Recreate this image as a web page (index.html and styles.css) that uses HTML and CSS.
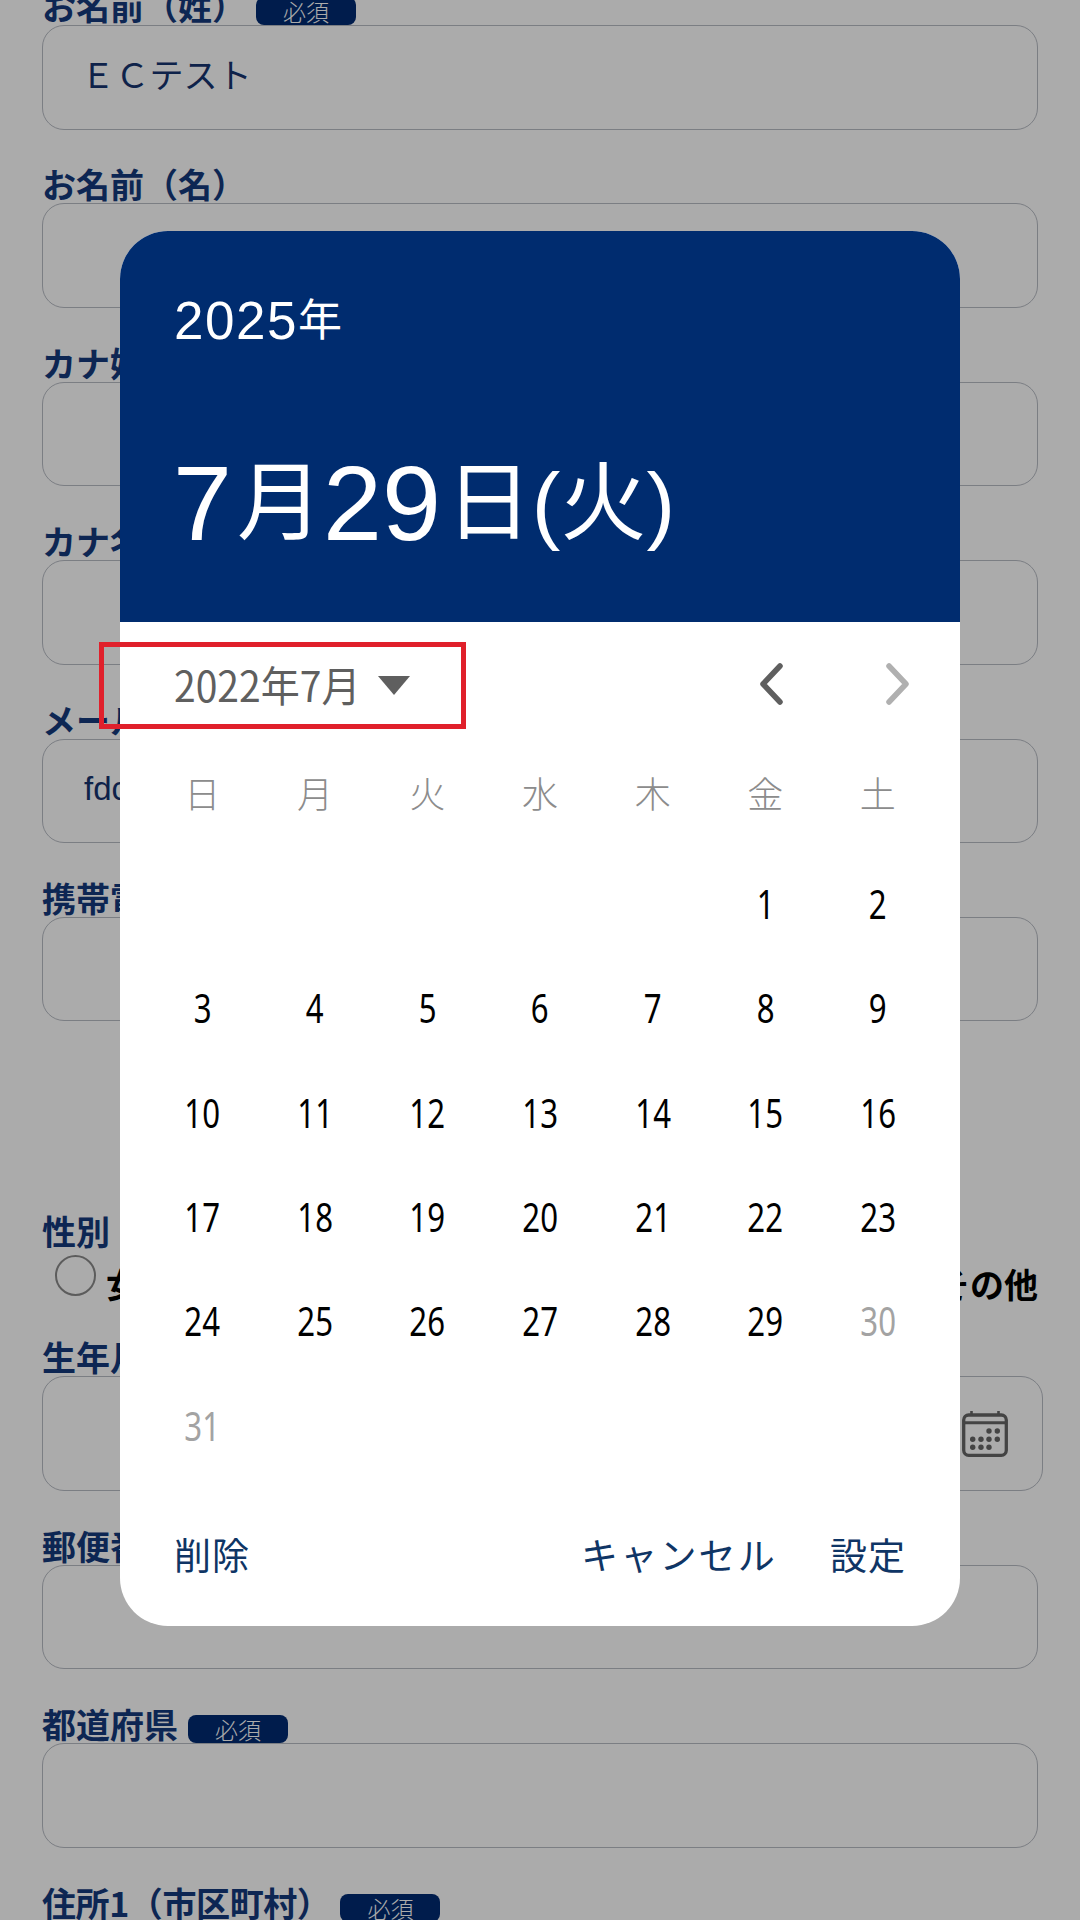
FILE: index.html
```html
<!DOCTYPE html>
<html lang="ja">
<head>
<meta charset="utf-8">
<title>日付選択</title>
<link rel="stylesheet" href="styles.css">
</head>
<body>
<main class="form">
  <section class="field"><div class="label">お名前（姓）<span class="badge">必須</span></div><div class="input"><span class="value">ＥＣテスト</span></div></section>
  <section class="field"><div class="label">お名前（名）</div><div class="input"></div></section>
  <section class="field"><div class="label">カナ姓</div><div class="input"></div></section>
  <section class="field"><div class="label">カナ名</div><div class="input"></div></section>
  <section class="field"><div class="label">メールアドレス</div><div class="input"><span class="value value-mail">fdc</span></div></section>
  <section class="field"><div class="label">携帯電話番号</div><div class="input"></div></section>
  <section class="field field-gender">
    <div class="label label-short">性別</div>
    <div class="radios">
      <label class="radio"><span class="dot"></span><span class="radio-text">女性</span></label>
      <label class="radio"><span class="dot"></span><span class="radio-text">男性</span></label>
      <label class="radio"><span class="radio-text">その他</span></label>
    </div>
  </section>
  <section class="field field-birth"><div class="label">生年月日</div>
    <div class="input input-birth">
      <svg class="cal" viewBox="0 0 46 46" width="46" height="46" aria-hidden="true">
        <rect x="1.7" y="4" width="42.6" height="40.3" rx="5" fill="none" stroke="#666" stroke-width="3.3"/>
        <path d="M1.700 11.700h42.600" stroke="#666" stroke-width="3"/>
        <path d="M9.500 0v5M36.500 0v5" stroke="#666" stroke-width="2.600"/>
        <g fill="#666"><circle cx="27" cy="20" r="2.7"/><circle cx="35.300" cy="20" r="2.7"/><circle cx="10.700" cy="28.300" r="2.7"/><circle cx="19" cy="28.300" r="2.7"/><circle cx="27" cy="28.300" r="2.7"/><circle cx="35.300" cy="28.300" r="2.7"/><circle cx="10.700" cy="36.300" r="2.7"/><circle cx="19" cy="36.300" r="2.7"/><circle cx="27" cy="36.300" r="2.7"/></g>
      </svg>
    </div>
  </section>
  <section class="field"><div class="label">郵便番号</div><div class="input"></div></section>
  <section class="field"><div class="label">都道府県<span class="badge">必須</span></div><div class="input"></div></section>
  <section class="field field-last"><div class="label label-addr">住所1（市区町村）<span class="badge">必須</span></div></section>
</main>

<div class="scrim"></div>

<div class="dialog" role="dialog">
  <header class="head">
    <div class="year"><span class="num">2025</span>年</div>
    <div class="date"><span class="num">7</span>月<span class="num">29</span>日(火)</div>
  </header>
  <div class="nav">
    <div class="month"><span class="month-text">2022年7月</span><svg class="tri" viewBox="0 0 32 19" width="32" height="19" aria-hidden="true"><path d="M0 0h32L16 19z" fill="#5f5f5f"/></svg></div>
    <div class="arrows">
      <svg viewBox="0 0 24 42" width="24" height="42" aria-hidden="true"><path d="M21 3 4 21l17 18" fill="none" stroke="#5f5f5f" stroke-width="5.500" stroke-linecap="round" stroke-linejoin="round"/></svg>
      <svg viewBox="0 0 24 42" width="24" height="42" aria-hidden="true"><path d="m3 3 17 18L3 39" fill="none" stroke="#b0b0b0" stroke-width="5.500" stroke-linecap="round" stroke-linejoin="round"/></svg>
    </div>
  </div>
  <div class="week"><span>日</span><span>月</span><span>火</span><span>水</span><span>木</span><span>金</span><span>土</span></div>
  <div class="days">
    <span></span><span></span><span></span><span></span><span></span><span><b>1</b></span><span><b>2</b></span>
    <span><b>3</b></span><span><b>4</b></span><span><b>5</b></span><span><b>6</b></span><span><b>7</b></span><span><b>8</b></span><span><b>9</b></span>
    <span><b>10</b></span><span><b>11</b></span><span><b>12</b></span><span><b>13</b></span><span><b>14</b></span><span><b>15</b></span><span><b>16</b></span>
    <span><b>17</b></span><span><b>18</b></span><span><b>19</b></span><span><b>20</b></span><span><b>21</b></span><span><b>22</b></span><span><b>23</b></span>
    <span><b>24</b></span><span><b>25</b></span><span><b>26</b></span><span><b>27</b></span><span><b>28</b></span><span><b>29</b></span><span class="off"><b>30</b></span>
    <span class="off"><b>31</b></span>
  </div>
  <footer class="actions">
    <span class="act">削除</span>
    <span class="act act-right">キャンセル</span>
    <span class="act act-set">設定</span>
  </footer>
</div>

<div class="mark"></div>
</body>
</html>
```
FILE: styles.css
```css
* { box-sizing: border-box; }
html, body { margin: 0; padding: 0; }
body {
  position: relative;
  width: 1080px;
  height: 1920px;
  overflow: hidden;
  background: #fff;
  font-family: "Noto Sans CJK JP", "Liberation Sans", sans-serif;
}

.form { padding: 0 42px; margin-top: -19px; }
.field { margin-bottom: 29.9px; }
.field-last { margin-bottom: 0; }
.label {
  display: flex;
  align-items: flex-end;
  height: 44px;
  font-size: 34px;
  line-height: 38px;
  font-weight: 700;
  color: #143a7c;
  white-space: nowrap;
}
.label-addr { letter-spacing: -0.4px; }
.badge {
  display: flex;
  justify-content: center;
  align-items: center;
  width: 100px;
  height: 28px;
  margin-left: 10px;
  border-radius: 8px;
  background: #002a72;
  color: #fff;
  font-size: 23px;
  font-weight: 300;
  line-height: 28px;
  letter-spacing: 0;
}
.input {
  display: flex;
  align-items: center;
  height: 104.5px;
  width: 996px;
  border: 1.2px solid #b8bcc4;
  border-radius: 22px;
  padding-left: 38px;
}
.value { font-size: 34px; letter-spacing: 0.2px; color: #16346f; margin-top: -8px; }
.value-mail { margin-left: 3px; margin-top: -3px; font-size: 33px; letter-spacing: 0; font-family: "Liberation Sans", sans-serif; }

.field-gender { margin-top: 189px; margin-bottom: 32px; }
.label-short { height: 40px; }
.radios { display: flex; justify-content: space-between; align-items: center; height: 50px; }
.radio { display: flex; align-items: center; font-size: 34px; font-weight: 700; color: #000; }
.radio-text { margin-top: 16px; }
.dot {
  width: 41px;
  height: 41px;
  margin: 0 10px 0 13px;
  border: 2.6px solid #8a8a8a;
  border-radius: 50%;
}
.field-birth { margin-bottom: 29.5px; }
.input-birth { width: 1001px; height: 115px; justify-content: flex-end; padding: 0 34px 0 0; }
.cal { display: block; }

.scrim { position: absolute; inset: 0; background: rgba(0, 0, 0, 0.33); }

.dialog {
  position: absolute;
  left: 120px;
  top: 231px;
  width: 840px;
  height: 1395px;
  display: flex;
  flex-direction: column;
  overflow: hidden;
  border-radius: 48px;
  background: #fff;
}
.head {
  flex: none;
  height: 391px;
  padding: 55px 54px 0;
  background: #002c6f;
  color: #fff;
  font-family: "Liberation Sans", "Noto Sans CJK JP", sans-serif;
}
.year { display: flex; align-items: center; font-size: 44px; line-height: 70px; }
.year .num { font-size: 53px; letter-spacing: 1.5px; }
.date { display: flex; align-items: center; margin: 82px 0 0 -1px; font-size: 86px; line-height: 130px; white-space: nowrap; }
.date .num { font-size: 106px; margin-right: 5px; }

.nav {
  flex: none;
  display: flex;
  justify-content: space-between;
  align-items: center;
  height: 124px;
  padding: 0 50px 0 54px;
}
.month { display: flex; align-items: center; color: #5f5f5f; }
.month-text {
  display: block;
  width: 204px;
  font-size: 42px;
  line-height: 60px;
  white-space: nowrap;
  transform: scaleX(0.93);
  transform-origin: left center;
}
.tri { display: block; margin-top: 2px; }
.arrows { display: flex; gap: 103px; }
.arrows svg { display: block; }

.week, .days {
  display: grid;
  grid-template-columns: repeat(7, 112.6px);
  padding: 0 26px;
  text-align: center;
}
.week { flex: none; height: 104px; align-items: center; margin-top: -6.5px; font-size: 36px; font-weight: 300; color: #8c8c8c; }
.days { flex: none; grid-auto-rows: 104.3px; align-items: center; margin-top: 6px; font-size: 40.5px; color: #000; }
.days b {
  display: inline-block;
  font-family: "Noto Sans", "Liberation Sans", sans-serif;
  font-weight: 400;
  transform: scaleX(0.77);
}
.off { color: #a3a3a3; }

.actions {
  position: absolute;
  left: 54px;
  right: 54px;
  bottom: 44px;
  display: flex;
  align-items: center;
  height: 56px;
  color: #0f3565;
}
.act { font-size: 37px; letter-spacing: 1px; line-height: 56px; white-space: nowrap; }
.act-right { margin-left: auto; letter-spacing: 2.2px; }
.act-set { margin-left: 53px; }

.mark {
  position: absolute;
  left: 99px;
  top: 642px;
  width: 367px;
  height: 87px;
  border: 5px solid #e0202b;
}
```
